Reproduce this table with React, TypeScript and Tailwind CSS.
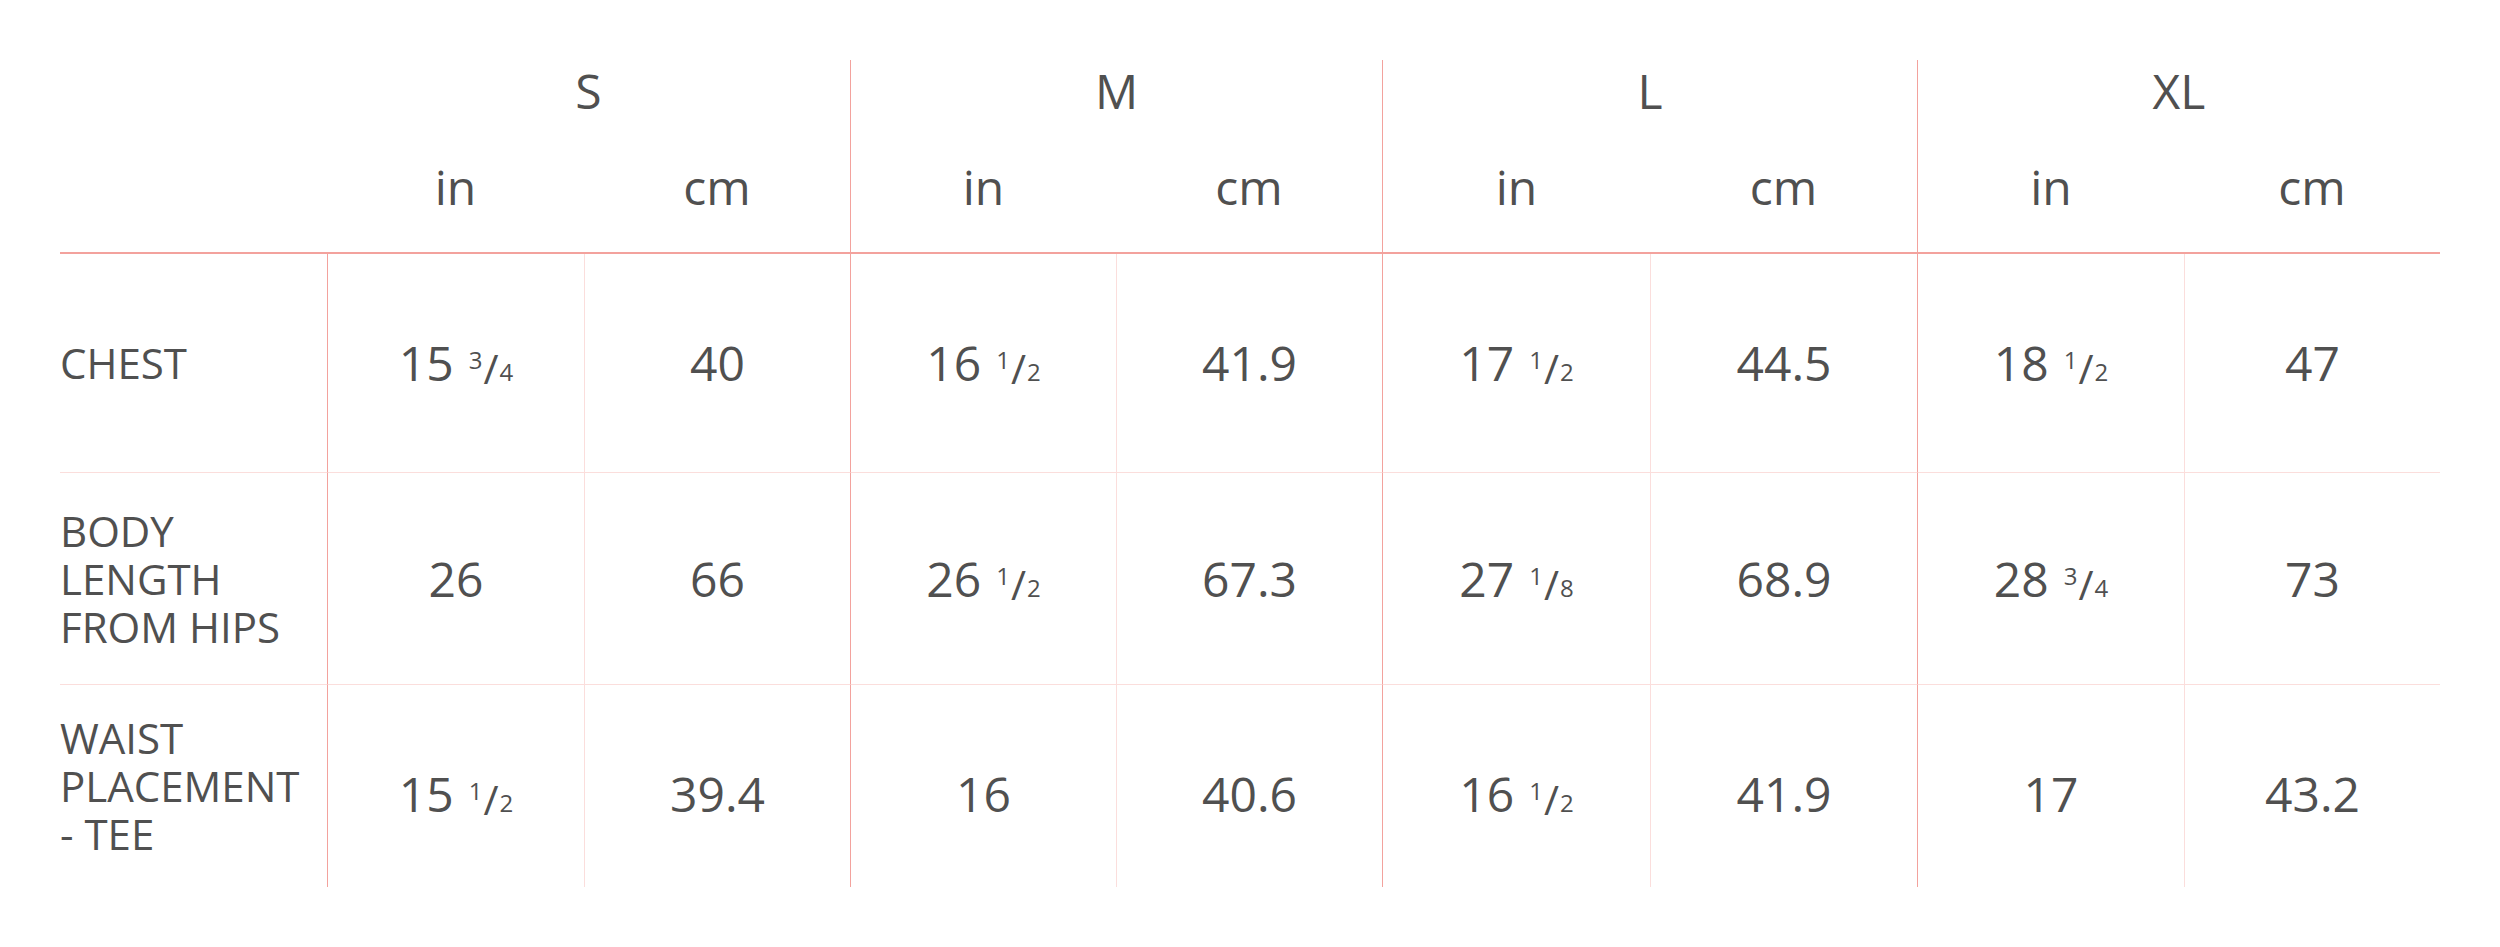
import React from 'react'

const sizes = ['S', 'M', 'L', 'XL']

type Cell = string | [string, string, string]

const rows: { label: string[]; values: Cell[]; height: string }[] = [
  { label: ['CHEST'], values: [['15', '3', '4'], '40', ['16', '1', '2'], '41.9', ['17', '1', '2'], '44.5', ['18', '1', '2'], '47'], height: 'h-[218px]' },
  { label: ['BODY', 'LENGTH', 'FROM HIPS'], values: ['26', '66', ['26', '1', '2'], '67.3', ['27', '1', '8'], '68.9', ['28', '3', '4'], '73'], height: 'h-[212px]' },
  { label: ['WAIST', 'PLACEMENT', '- TEE'], values: [['15', '1', '2'], '39.4', '16', '40.6', ['16', '1', '2'], '41.9', '17', '43.2'], height: 'h-[203px]' },
]

// heavy = between size groups, light = between in / cm
const heavy = 'border-l border-l-[#f3a29d]'
const light = 'border-l border-l-[#fbdedc]'

function Value({ value }: { value: Cell }) {
  if (typeof value === 'string') return <span>{value}</span>
  const [whole, num, den] = value
  return (
    <span className="inline-flex items-baseline">
      <span>{whole}</span>
      <span className="relative -top-[12px] ml-[15px] text-[24px]">{num}</span>
      <span className="relative top-[3px] mx-[1px] text-[41px]">/</span>
      <span className="text-[24px]">{den}</span>
    </span>
  )
}

function App() {
  return (
    <div className="min-h-screen bg-white pl-[60px] pt-[60px] font-['Open_Sans',sans-serif] text-[#505050]">
      <div className="grid w-[2380px] grid-cols-[267px_257px_266px_266px_266px_268px_267px_267px_256px]">
        {/* Size row */}
        <div className="h-[62px]" />
        {sizes.map((size, i) => (
          <div
            key={size}
            className={`col-span-2 flex h-[62px] items-center justify-center text-[48px] leading-none ${i > 0 ? heavy : ''}`}
          >
            {size}
          </div>
        ))}

        {/* Unit row */}
        <div className="h-[132px] border-b-2 border-b-[#f3a29d]" />
        {sizes.map((size, i) => (
          <React.Fragment key={size + '-units'}>
            <div
              className={`flex h-[132px] items-center justify-center border-b-2 border-b-[#f3a29d] text-[48px] leading-none ${i > 0 ? heavy : ''}`}
            >
              in
            </div>
            <div className="flex h-[132px] items-center justify-center border-b-2 border-b-[#f3a29d] text-[48px] leading-none">
              cm
            </div>
          </React.Fragment>
        ))}

        {/* Body */}
        {rows.map((row, r) => (
          <React.Fragment key={row.label.join(' ')}>
            <div
              className={`flex flex-col justify-center text-[42px] leading-[48px] ${row.height} ${r > 0 ? 'border-t border-t-[#fbdedc]' : ''}`}
            >
              {row.label.map((line) => (
                <span key={line}>{line}</span>
              ))}
            </div>
            {row.values.map((v, c) => (
              <div
                key={c}
                className={`flex items-center justify-center text-[48px] leading-none ${row.height} ${c % 2 === 0 ? heavy : light} ${r > 0 ? 'border-t border-t-[#fbdedc]' : ''} ${r === 2 ? 'pt-[15px]' : ''}`}
              >
                <Value value={v} />
              </div>
            ))}
          </React.Fragment>
        ))}
      </div>
    </div>
  )
}

export default App
